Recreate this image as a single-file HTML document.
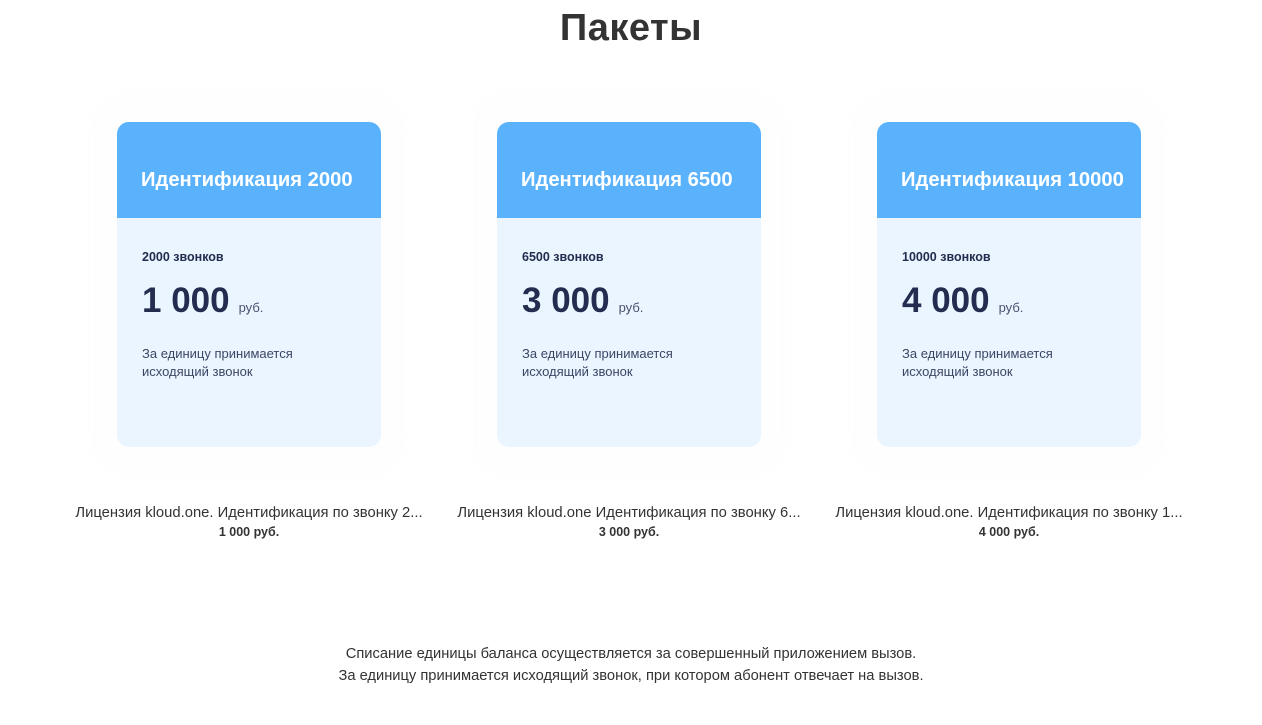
<!DOCTYPE html>
<html><head><meta charset="utf-8"><style>
body{margin:0;width:1262px;height:725px;background:#fff;font-family:"Liberation Sans","DejaVu Sans",sans-serif;position:relative;overflow:hidden;color:#333}
h1{position:absolute;top:7px;left:0;width:1262px;text-align:center;margin:0;font-size:38px;font-weight:bold;color:#333;letter-spacing:0.5px}
.wrap{position:absolute;top:100px;width:304px;height:368px;border-radius:28px;background:#fefeff;box-shadow:0 0 10px rgba(240,242,248,.35)}
.card{position:absolute;top:22px;left:20px;width:264px;height:325px;border-radius:12px;background:#eaf5ff;overflow:hidden}
.hd{height:96px;background:#5ab2fc;color:#fff;font-weight:bold;font-size:20.2px;line-height:116px;padding-left:24px;white-space:nowrap;overflow:hidden}
.calls{position:absolute;top:128px;left:25px;font-size:12.5px;font-weight:bold;color:#242d4f}
.price{position:absolute;top:159px;left:25px;font-size:35px;font-weight:bold;color:#242d4f;white-space:nowrap}
.price span{font-size:13px;font-weight:normal;margin-left:9px;color:#4a5270}
.desc{position:absolute;top:223px;left:25px;font-size:13px;line-height:18px;color:#3d4565}
.cap{position:absolute;top:504px;width:380px;text-align:center;font-size:14.8px;color:#333;line-height:19px}
.cap b{font-size:12.5px}
.foot{position:absolute;top:643px;width:1262px;text-align:center;font-size:14.7px;line-height:22px;color:#333}
</style></head><body>
<h1>Пакеты</h1>
<div class="wrap" style="left:97px"><div class="card"><div class="hd">Идентификация 2000</div><div class="calls">2000 звонков</div><div class="price">1 000<span>руб.</span></div><div class="desc">За единицу принимается<br>исходящий звонок</div></div></div>
<div class="wrap" style="left:477px"><div class="card"><div class="hd">Идентификация 6500</div><div class="calls">6500 звонков</div><div class="price">3 000<span>руб.</span></div><div class="desc">За единицу принимается<br>исходящий звонок</div></div></div>
<div class="wrap" style="left:857px"><div class="card"><div class="hd">Идентификация 10000</div><div class="calls">10000 звонков</div><div class="price">4 000<span>руб.</span></div><div class="desc">За единицу принимается<br>исходящий звонок</div></div></div>
<div class="cap" style="left:59px">Лицензия kloud.one. Идентификация по звонку 2...<br><b>1 000 руб.</b></div>
<div class="cap" style="left:439px">Лицензия kloud.one Идентификация по звонку 6...<br><b>3 000 руб.</b></div>
<div class="cap" style="left:819px">Лицензия kloud.one. Идентификация по звонку 1...<br><b>4 000 руб.</b></div>
<div class="foot">Списание единицы баланса осуществляется за совершенный приложением вызов.<br>За единицу принимается исходящий звонок, при котором абонент отвечает на вызов.</div>
</body></html>
